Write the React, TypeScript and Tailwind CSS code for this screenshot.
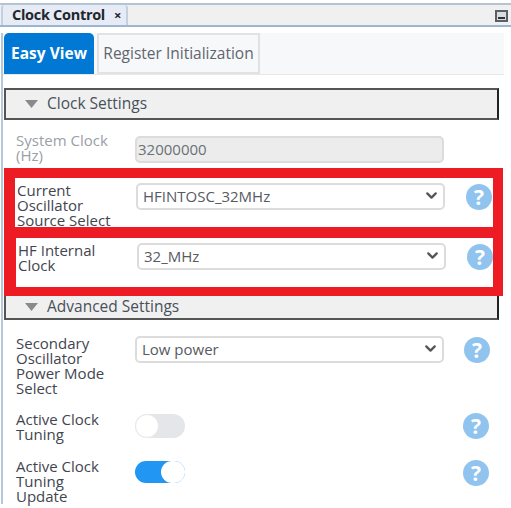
import { ChevronDown } from "lucide-react";

const FONT = "font-['Open_Sans','Noto_Sans',sans-serif]";

function Help() {
  return (
    <span className="flex h-[26px] w-[26px] shrink-0 items-center justify-center rounded-full bg-[#90c4ef] text-[21px] font-bold leading-none text-white">
      ?
    </span>
  );
}

function Dropdown({ value }: { value: string }) {
  return (
    <div className="relative h-[27px] w-[309px] shrink-0">
      <select
        defaultValue={value}
        className="h-full w-full appearance-none rounded-[5px] border-2 border-[#dcdcdc] bg-white pl-[5px] text-[15px] text-[#555b62] outline-none"
      >
        <option>{value}</option>
      </select>
      <ChevronDown className="pointer-events-none absolute right-[5px] top-[4px] h-[17px] w-[17px] text-[#555555]" strokeWidth={3.2} />
    </div>
  );
}

function Label({ lines, color = "text-[#3f4650]" }: { lines: string[]; color?: string }) {
  return (
    <div className={`w-[119px] shrink-0 text-[15px] leading-[15px] ${color}`}>
      {lines.map((line) => (
        <div key={line} className="whitespace-nowrap">{line}</div>
      ))}
    </div>
  );
}

function SectionTitle({ title }: { title: string }) {
  return (
    <div className="flex h-full items-center pl-[19px] text-[15.5px] text-[#48505a]">
      <svg width="13" height="8" viewBox="0 0 13 8" className="mr-[7px] shrink-0">
        <path d="M0 0h13L6.5 8z" fill="#8a8a8a" />
      </svg>
      <span className="ml-[2px]">{title}</span>
    </div>
  );
}

export default function App() {
  return (
    <div className={`h-[508px] w-[511px] overflow-hidden bg-white pt-[3px] ${FONT}`}>
      {/* Tab bar */}
      <div className="flex h-[24px] items-stretch justify-between border-y-2 border-t-[#b4c4d2] border-b-[#9ab6d0] bg-[#f0f0f0]">
        <div className="ml-[1px] flex w-[127px] items-center rounded-t-[3px] border-x-2 border-x-[#c3d0df] bg-[#e6ebf5] pl-[9px] text-[14.5px] font-bold text-[#22262c]">
          <span className="whitespace-nowrap tracking-[-0.3px]">Clock Control</span>
          <span className="ml-[9px] text-[13px] leading-none">×</span>
        </div>
        <div className="mr-[3px] mt-[5px] flex h-[12px] w-[13px] items-end justify-center border-2 border-[#5a6068] bg-[#d8dde3] pb-[1px]">
          <span className="h-[2px] w-[7px] bg-[#333333]" />
        </div>
      </div>

      <div className="ml-[1px] border-l-2 border-l-[#b4c8da]">
        {/* View tabs */}
        <div className="mr-[7px] mt-[6px] flex h-[42px] gap-[3px] border-b border-b-[#e8e8e8] bg-[#f7f8fa] pl-[1px]">
          <div className="flex h-[41px] w-[90px] items-center justify-center rounded-t-[5px] bg-[#0078d4] text-[15.5px] font-bold text-white">
            Easy View
          </div>
          <div className="flex h-[41px] w-[163px] items-center justify-center border-2 border-[#e2e2e2] text-[15.5px] text-[#5f666e]">
            Register Initialization
          </div>
        </div>

        {/* Clock settings */}
        <div className="ml-[1px] mr-[12px] mt-[13px] h-[32px] border-2 border-[#555555] border-r-[#222222] bg-[#f0f0f0]">
          <SectionTitle title="Clock Settings" />
        </div>
        <div className="ml-[13px] mt-[13px] flex h-[35px] items-start">
          <Label lines={["System Clock", "(Hz)"]} color="text-[#9aa0a6]" />
          <div className="mt-[3px] flex h-[27px] w-[309px] items-center rounded-[5px] border-2 border-[#dcdcdc] bg-[#ececec] pl-[1px] text-[15px] text-[#6a7076]">
            32000000
          </div>
        </div>

        {/* Highlighted rows */}
        <div className="ml-[1px] mr-[8px] flex h-[128px] flex-col bg-[#ed1c24] pb-[9px] pl-[11px] pr-[10px] pt-[10px]">
          <div className="flex h-[49px] items-start bg-white pl-[2px] pt-[5px]">
            <Label lines={["Current", "Oscillator", "Source Select"]} />
            <Dropdown value="HFINTOSC_32MHz" />
            <span className="ml-[21px] mt-[1px]"><Help /></span>
          </div>
          <div className="ml-[1px] mt-[11px] flex h-[49px] items-start bg-white pl-[2px] pt-[5px]">
            <Label lines={["HF Internal", "Clock"]} />
            <Dropdown value="32_MHz" />
            <span className="ml-[21px] mt-[1px]"><Help /></span>
          </div>
        </div>

        {/* Advanced settings */}
        <div className="ml-[1px] mr-[12px] h-[24px] border-2 border-t-0 border-[#555555] border-r-[#222222] bg-[#f0f0f0]">
          <SectionTitle title="Advanced Settings" />
        </div>
        <div className="ml-[13px] mt-[16px] flex h-[73px] items-start">
          <Label lines={["Secondary", "Oscillator", "Power Mode", "Select"]} />
          <Dropdown value="Low power" />
          <span className="ml-[20px] mt-[1px]"><Help /></span>
        </div>
        <div className="ml-[13px] mt-[3px] flex h-[45px] items-start">
          <Label lines={["Active Clock", "Tuning"]} />
          <div className="mt-[2px] h-[24px] w-[50px] rounded-full bg-[#e4e6e9]">
            <div className="h-[24px] w-[24px] rounded-full border border-[#e8e8e8] bg-white" />
          </div>
          <span className="ml-[278px] mt-[1px]"><Help /></span>
        </div>
        <div className="ml-[13px] mt-[2px] flex items-start">
          <Label lines={["Active Clock", "Tuning", "Update"]} />
          <div className="mt-[2px] flex h-[22px] w-[50px] justify-end rounded-full bg-[#2196f3]">
            <div className="h-[22px] w-[24px] rounded-full bg-white" />
          </div>
          <span className="ml-[278px] mt-[1px]"><Help /></span>
        </div>
      </div>
    </div>
  );
}
